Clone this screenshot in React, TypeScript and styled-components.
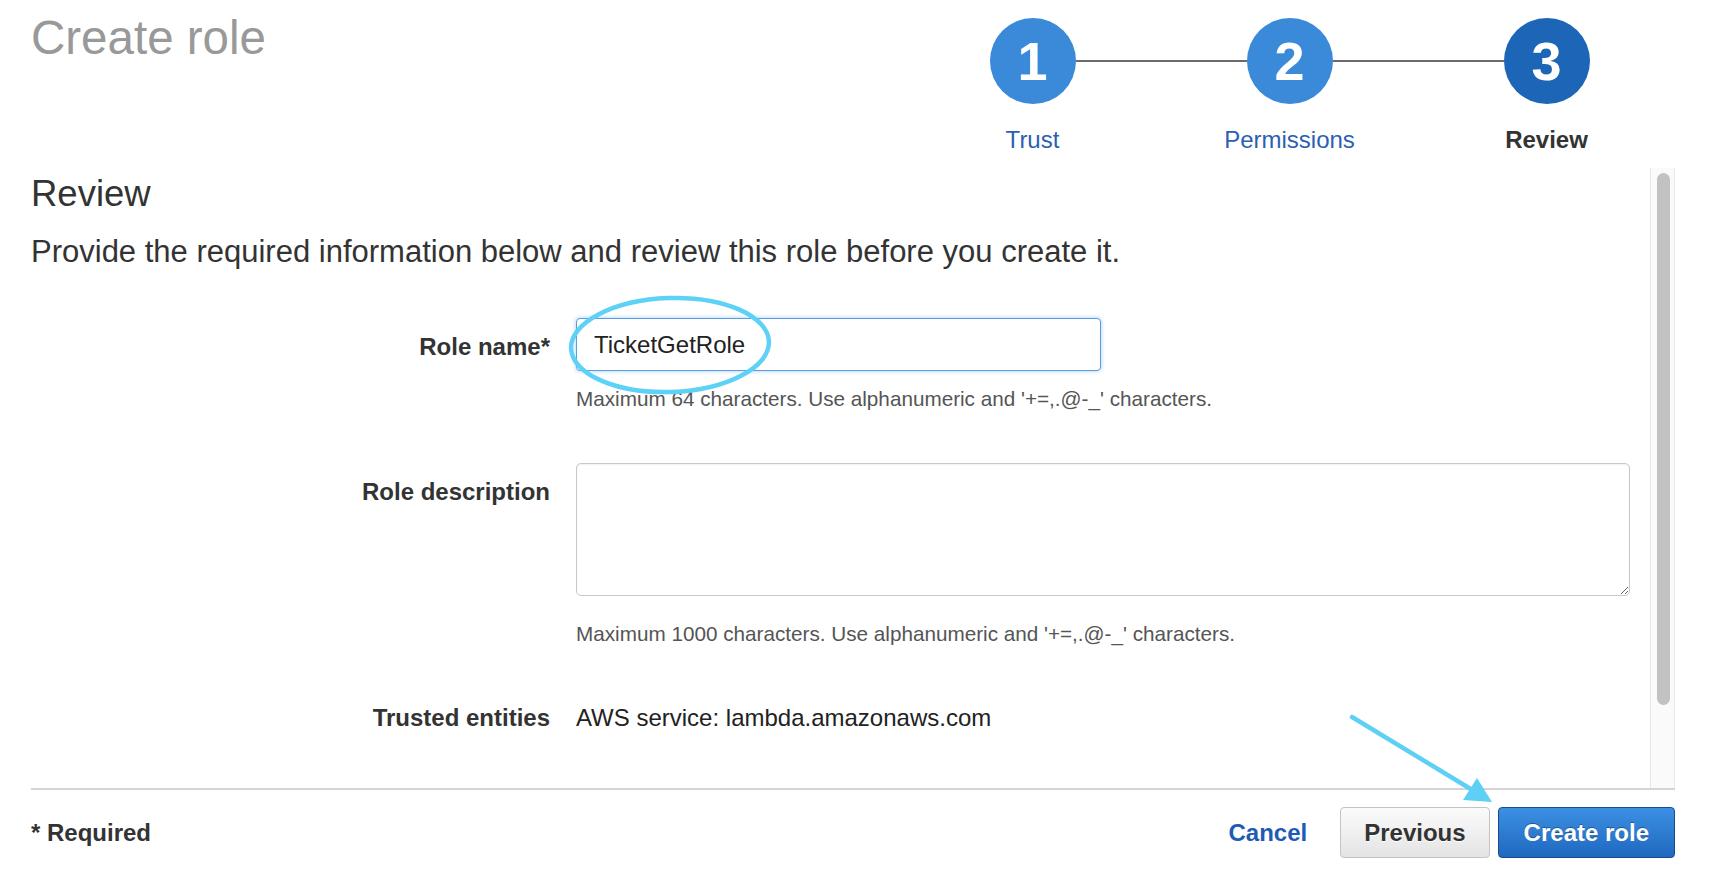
import styled, { createGlobalStyle } from "styled-components";

const GlobalStyle = createGlobalStyle`
  html, body {
    margin: 0;
    padding: 0;
    background: #fff;
  }
  body {
    font-family: "Liberation Sans", Arial, Helvetica, sans-serif;
    color: #333;
  }
  * {
    box-sizing: border-box;
  }
`;

const Page = styled.div`
  position: relative;
  width: 1727px;
  height: 885px;
  padding: 0 52px 0 31px;
  display: flex;
  flex-direction: column;
  overflow: hidden;
`;

const Header = styled.header`
  flex: none;
  height: 168px;
  display: flex;
  justify-content: space-between;
  align-items: flex-start;
`;

const PageTitle = styled.h1`
  margin: 14px 0 0;
  font-size: 47.5px;
  line-height: 48px;
  font-weight: 400;
  color: #999;
`;

const Stepper = styled.ol`
  list-style: none;
  margin: 18px 0 0;
  padding: 0;
  display: grid;
  grid-template-columns: repeat(3, 257px);
`;

const Step = styled.li`
  display: flex;
  flex-direction: column;
  align-items: center;
`;

const Track = styled.div`
  width: 100%;
  display: flex;
  align-items: center;
`;

const Connector = styled.span<{ $hidden?: boolean }>`
  flex: 1;
  height: 2px;
  background: ${({ $hidden }) => ($hidden ? "transparent" : "#6a6a6a")};
`;

const Circle = styled.span<{ $current?: boolean }>`
  flex: none;
  width: 86px;
  height: 86px;
  border-radius: 50%;
  background: ${({ $current }) => ($current ? "#1d65b6" : "#3a8ad9")};
  color: #fff;
  font-size: 54px;
  font-weight: 700;
  line-height: 1;
  display: flex;
  align-items: center;
  justify-content: center;
`;

const StepLabel = styled.span<{ $current?: boolean }>`
  margin-top: 22px;
  font-size: 24px;
  line-height: 28px;
  font-weight: ${({ $current }) => ($current ? 700 : 400)};
  color: ${({ $current }) => ($current ? "#333" : "#2b5fb4")};
`;

const ScrollArea = styled.div`
  flex: none;
  height: 622px;
  display: flex;
  border-bottom: 2px solid #d4d4d4;
`;

const Content = styled.div`
  flex: 1;
  min-width: 0;
  overflow: hidden;
  padding-top: 6px;
`;

// scrollbar drawn as in the screenshot (headless hides native ones)
const ScrollTrack = styled.div`
  flex: none;
  width: 25px;
  padding: 5px 4px 0 6px;
  background: #fafafa;
  border-left: 1px solid #e4e4e4;
  border-right: 1px solid #ececec;
`;

const ScrollThumb = styled.div`
  height: 532px;
  border-radius: 8px;
  background: #c2c2c2;
`;

const SectionTitle = styled.h2`
  margin: 0;
  font-size: 36.5px;
  line-height: 40px;
  font-weight: 400;
  color: #333;
`;

const Intro = styled.p`
  margin: 21px 0 0;
  font-size: 31px;
  line-height: 34px;
  color: #333;
`;

const FormRow = styled.div<{ $gap: number }>`
  display: grid;
  grid-template-columns: 519px 1054px;
  column-gap: 26px;
  align-items: start;
  margin-top: ${({ $gap }) => $gap}px;
`;

const FieldLabel = styled.label<{ $pad?: number }>`
  padding-top: ${({ $pad }) => $pad ?? 0}px;
  text-align: right;
  font-size: 24px;
  line-height: 28px;
  font-weight: 700;
  color: #333;
`;

const Field = styled.div`
  display: flex;
  flex-direction: column;
  align-items: flex-start;
`;

const TextInput = styled.input`
  width: 525px;
  height: 53px;
  padding: 0 17px;
  border: 1px solid #5a9ddc;
  border-radius: 4px;
  box-shadow: 0 0 4px rgba(82, 160, 236, 0.55);
  font-family: inherit;
  font-size: 24px;
  color: #222;
  outline: none;
`;

const TextArea = styled.textarea`
  width: 1054px;
  height: 133px;
  padding: 12px 17px;
  border: 1px solid #c8c8c8;
  border-radius: 5px;
  box-shadow: inset 0 1px 2px rgba(0, 0, 0, 0.06);
  font-family: inherit;
  font-size: 24px;
  color: #222;
  resize: vertical;
  outline: none;
`;

const Hint = styled.p<{ $gap: number }>`
  margin: ${({ $gap }) => $gap}px 0 0;
  font-size: 20.7px;
  line-height: 24px;
  color: #555;
`;

const Value = styled.span`
  font-size: 24px;
  line-height: 28px;
  color: #222;
`;

const Footer = styled.footer`
  flex: none;
  display: flex;
  justify-content: space-between;
  align-items: center;
  padding-top: 17px;
`;

const RequiredNote = styled.span`
  font-size: 24px;
  font-weight: 700;
  color: #333;
`;

const Actions = styled.div`
  display: flex;
  align-items: center;
  gap: 8px;
`;

const CancelLink = styled.a`
  margin-right: 25px;
  font-size: 24px;
  font-weight: 700;
  color: #1f5bb5;
  text-decoration: none;
  cursor: pointer;
`;

const Button = styled.button<{ $primary?: boolean }>`
  height: 51px;
  padding: 0 ${({ $primary }) => ($primary ? 25 : 23)}px;
  border-radius: 4px;
  font-family: inherit;
  font-size: 24px;
  font-weight: 700;
  cursor: pointer;
  border: 1px solid ${({ $primary }) => ($primary ? "#1a4a8c" : "#c4c4c4")};
  color: ${({ $primary }) => ($primary ? "#fff" : "#333")};
  background: ${({ $primary }) =>
    $primary
      ? "linear-gradient(#3c90e4, #1f68c0)"
      : "linear-gradient(#fbfbfb, #e4e4e4)"};
  text-shadow: ${({ $primary }) =>
    $primary ? "0 -1px 0 rgba(0, 0, 0, 0.35)" : "0 1px 0 #fff"};
`;

const Annotations = styled.svg`
  position: absolute;
  left: 0;
  top: 0;
  width: 1727px;
  height: 885px;
  pointer-events: none;
`;

const steps = [
  { n: 1, label: "Trust" },
  { n: 2, label: "Permissions" },
  { n: 3, label: "Review" },
];

const App = () => {
  const current = 3;

  return (
    <>
      <GlobalStyle />
      <Page>
        <Header>
          <PageTitle>Create role</PageTitle>
          <Stepper>
            {steps.map((s, i) => (
              <Step key={s.n}>
                <Track>
                  <Connector $hidden={i === 0} />
                  <Circle $current={s.n === current}>{s.n}</Circle>
                  <Connector $hidden={i === steps.length - 1} />
                </Track>
                <StepLabel $current={s.n === current}>{s.label}</StepLabel>
              </Step>
            ))}
          </Stepper>
        </Header>

        <ScrollArea>
          <Content>
            <SectionTitle>Review</SectionTitle>
            <Intro>
              Provide the required information below and review this role before you
              create it.
            </Intro>

            <FormRow $gap={49}>
              <FieldLabel $pad={15} htmlFor="role-name">
                Role name*
              </FieldLabel>
              <Field>
                <TextInput id="role-name" defaultValue="TicketGetRole" />
                <Hint $gap={16}>
                  Maximum 64 characters. Use alphanumeric and '+=,.@-_' characters.
                </Hint>
              </Field>
            </FormRow>

            <FormRow $gap={52}>
              <FieldLabel $pad={15} htmlFor="role-desc">
                Role description
              </FieldLabel>
              <Field>
                <TextArea id="role-desc" />
                <Hint $gap={26}>
                  Maximum 1000 characters. Use alphanumeric and '+=,.@-_' characters.
                </Hint>
              </Field>
            </FormRow>

            <FormRow $gap={58}>
              <FieldLabel>Trusted entities</FieldLabel>
              <Value>AWS service: lambda.amazonaws.com</Value>
            </FormRow>
          </Content>
          <ScrollTrack>
            <ScrollThumb />
          </ScrollTrack>
        </ScrollArea>

        <Footer>
          <RequiredNote>* Required</RequiredNote>
          <Actions>
            <CancelLink>Cancel</CancelLink>
            <Button>Previous</Button>
            <Button $primary>Create role</Button>
          </Actions>
        </Footer>

        <Annotations viewBox="0 0 1727 885">
          <ellipse
            cx="670"
            cy="345"
            rx="99"
            ry="47"
            fill="none"
            stroke="#5dd2f6"
            strokeWidth="4.5"
            transform="rotate(-2 670 345)"
          />
          <line
            x1="1352"
            y1="717"
            x2="1474"
            y2="791"
            stroke="#5fd0f5"
            strokeWidth="4.5"
            strokeLinecap="round"
          />
          <polygon points="1492,802 1463,800 1477,778" fill="#5fd0f5" />
        </Annotations>
      </Page>
    </>
  );
};

export default App;
